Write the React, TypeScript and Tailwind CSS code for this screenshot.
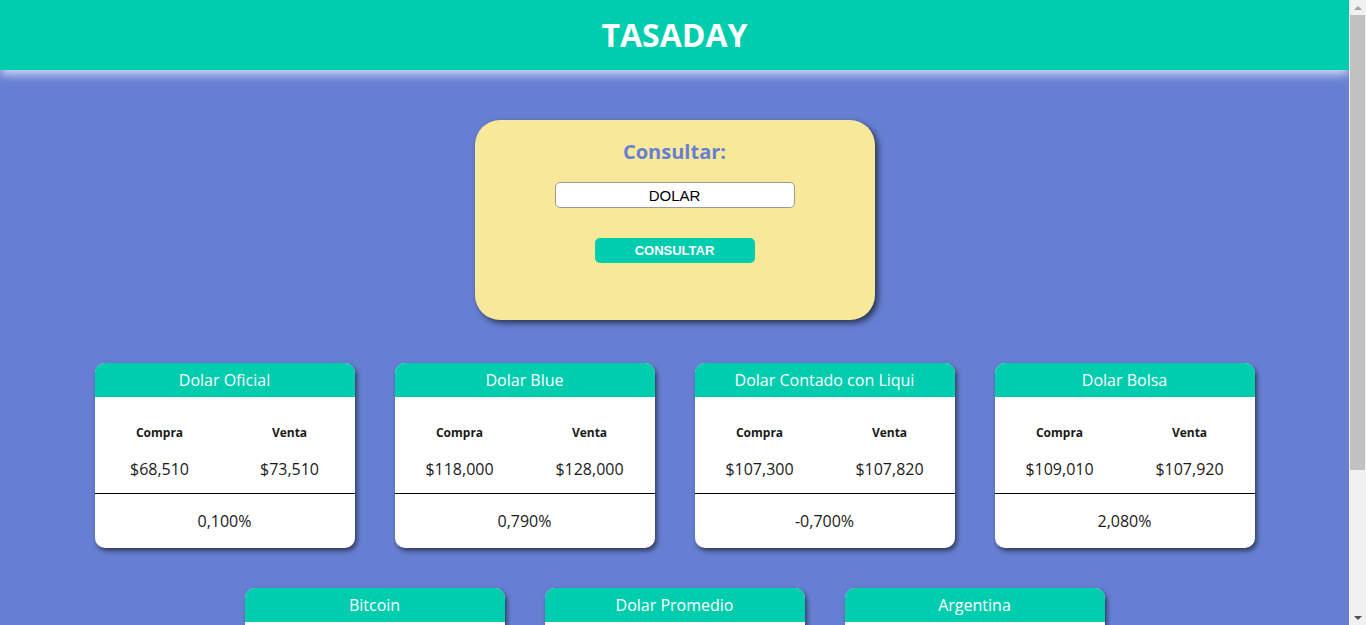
const rates = [
  { name: "Dolar Oficial", compra: "$68,510", venta: "$73,510", variacion: "0,100%" },
  { name: "Dolar Blue", compra: "$118,000", venta: "$128,000", variacion: "0,790%" },
  { name: "Dolar Contado con Liqui", compra: "$107,300", venta: "$107,820", variacion: "-0,700%" },
  { name: "Dolar Bolsa", compra: "$109,010", venta: "$107,920", variacion: "2,080%" },
  { name: "Bitcoin", compra: "$9.150,000", venta: "$9.150,000", variacion: "0,000%" },
  { name: "Dolar Promedio", compra: "$77,960", venta: "$78,130", variacion: "0,000%" },
  { name: "Argentina", compra: "1.445", venta: "", variacion: "0,000%" },
];

function RateCard({ name, compra, venta, variacion }: (typeof rates)[number]) {
  return (
    <div className="w-[260px] rounded-[10px] bg-white shadow-[2px_3px_5px_rgba(0,0,0,0.55)] overflow-hidden">
      <div className="h-[34px] flex items-center justify-center bg-[#00ccae] text-white text-[16px]">
        {name}
      </div>
      <div className="grid grid-cols-2 pt-[28px] pb-[13px] text-[#1a1a1a]">
        <div className="flex flex-col items-center">
          <span className="text-[12px] font-bold leading-[16px]">Compra</span>
          <span className="mt-[17px] text-[16px] leading-[22px]">{compra}</span>
        </div>
        <div className="flex flex-col items-center">
          <span className="text-[12px] font-bold leading-[16px]">Venta</span>
          <span className="mt-[17px] text-[16px] leading-[22px]">{venta}</span>
        </div>
      </div>
      <div className="h-[55px] border-t border-black flex items-center justify-center text-[16px] text-[#1a1a1a]">
        {variacion}
      </div>
    </div>
  );
}

// browser scrollbar, as seen in the screenshot
function Scrollbar() {
  return (
    <div className="w-[17px] h-screen bg-[#f1f1f1] flex flex-col items-center shrink-0">
      <div className="h-[15px] flex items-center justify-center">
        <div className="w-0 h-0 border-l-[4px] border-r-[4px] border-b-[4px] border-l-transparent border-r-transparent border-b-[#a3a3a3]" />
      </div>
      <div className="w-[15px] h-[455px] bg-[#c1c1c1]" />
      <div className="flex-1" />
      <div className="h-[15px] flex items-center justify-center">
        <div className="w-0 h-0 border-l-[4px] border-r-[4px] border-t-[4px] border-l-transparent border-r-transparent border-t-[#505050]" />
      </div>
    </div>
  );
}

export default function App() {
  return (
    <div className="flex h-screen overflow-hidden">
      <div className="flex-1 min-h-screen bg-[#667fd3] font-['Open_Sans',sans-serif] pb-[40px]">
        <header className="h-[70px] bg-[#00ccae] flex items-center justify-center shadow-[0_4px_10px_rgba(230,235,255,0.9)]">
          <h1 className="text-white text-[32px] font-bold">TASADAY</h1>
        </header>

        <div className="flex justify-center pt-[50px]">
          <form className="w-[400px] h-[200px] rounded-[25px] bg-[#f8e89a] shadow-[3px_3px_6px_rgba(0,0,0,0.6)] flex flex-col items-center pt-[18px]">
            <h2 className="text-[#667fd3] text-[20px] font-bold leading-[28px]">Consultar:</h2>
            <input
              type="text"
              defaultValue="DOLAR"
              className="mt-[16px] w-[240px] h-[26px] rounded-[5px] border border-[#9a9a9a] bg-white text-center text-[15px] text-black font-['Liberation_Sans',Arial,sans-serif]"
            />
            <button
              type="button"
              className="mt-[30px] w-[160px] h-[25px] rounded-[5px] bg-[#00ccae] text-white text-[13px] font-bold font-['Liberation_Sans',Arial,sans-serif]"
            >
              CONSULTAR
            </button>
          </form>
        </div>

        <div className="mt-[43px] flex flex-wrap justify-center gap-[40px] px-[94px]">
          {rates.map((r) => (
            <RateCard key={r.name} {...r} />
          ))}
        </div>
      </div>
      <Scrollbar />
    </div>
  );
}
